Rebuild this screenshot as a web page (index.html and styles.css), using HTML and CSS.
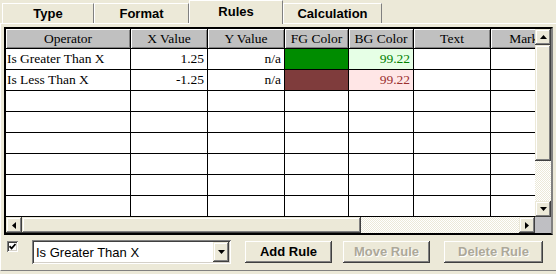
FILE: index.html
```html
<!DOCTYPE HTML>
<html>
<head>
<meta charset="utf-8" />
<title>Rules</title>
<link rel="stylesheet" href="styles.css">
</head>
<body>
	<div class="tabs">
		<div class="tab t-type">Type</div>
		<div class="tab t-format">Format</div>
		<div class="tab t-rules active">Rules</div>
		<div class="tab t-calc">Calculation</div>
	</div>
	<div class="panel">
		<div class="frame">
			<div class="view">
				<div class="row head">
					<div class="c c1">Operator</div>
					<div class="c c2">X Value</div>
					<div class="c c3">Y Value</div>
					<div class="c c4">FG Color</div>
					<div class="c c5">BG Color</div>
					<div class="c c6">Text</div>
					<div class="c c7">Marker</div>
				</div>
				<div class="row">
					<div class="c c1">Is Greater Than X</div>
					<div class="c c2 num">1.25</div>
					<div class="c c3 num">n/a</div>
					<div class="c c4 fg-green"></div>
					<div class="c c5 num bg-green">99.22</div>
					<div class="c c6"></div>
					<div class="c c7"></div>
				</div>
				<div class="row">
					<div class="c c1">Is Less Than X</div>
					<div class="c c2 num">-1.25</div>
					<div class="c c3 num">n/a</div>
					<div class="c c4 fg-red"></div>
					<div class="c c5 num bg-red">99.22</div>
					<div class="c c6"></div>
					<div class="c c7"></div>
				</div>
				<div class="row"><div class="c c1"></div><div class="c c2"></div><div class="c c3"></div><div class="c c4"></div><div class="c c5"></div><div class="c c6"></div><div class="c c7"></div></div>
				<div class="row"><div class="c c1"></div><div class="c c2"></div><div class="c c3"></div><div class="c c4"></div><div class="c c5"></div><div class="c c6"></div><div class="c c7"></div></div>
				<div class="row"><div class="c c1"></div><div class="c c2"></div><div class="c c3"></div><div class="c c4"></div><div class="c c5"></div><div class="c c6"></div><div class="c c7"></div></div>
				<div class="row"><div class="c c1"></div><div class="c c2"></div><div class="c c3"></div><div class="c c4"></div><div class="c c5"></div><div class="c c6"></div><div class="c c7"></div></div>
				<div class="row"><div class="c c1"></div><div class="c c2"></div><div class="c c3"></div><div class="c c4"></div><div class="c c5"></div><div class="c c6"></div><div class="c c7"></div></div>
				<div class="row"><div class="c c1"></div><div class="c c2"></div><div class="c c3"></div><div class="c c4"></div><div class="c c5"></div><div class="c c6"></div><div class="c c7"></div></div>
			</div>
			<div class="vscroll">
				<div class="sbtn"><svg width="7" height="4"><polygon points="0,4 3.5,0 7,4" fill="#000"/></svg></div>
				<div class="sbtn vthumb"></div>
				<div class="track"></div>
				<div class="sbtn"><svg width="7" height="4"><polygon points="0,0 7,0 3.5,4" fill="#000"/></svg></div>
			</div>
			<div class="hscroll">
				<div class="sbtn"><svg width="4" height="7"><polygon points="4,0 4,7 0,3.5" fill="#000"/></svg></div>
				<div class="sbtn hthumb"></div>
				<div class="track"></div>
				<div class="sbtn"><svg width="4" height="7"><polygon points="0,0 4,3.5 0,7" fill="#000"/></svg></div>
			</div>
			<div class="corner"></div>
		</div>
		<div class="controls">
			<div class="check"><svg width="7" height="7"><path d="M0.5 3.2 L2.6 5.4 L6.5 1" stroke="#000" stroke-width="1.7" fill="none"/></svg></div>
			<div class="combo">
				<span class="combo-text">Is Greater Than X</span>
				<div class="sbtn drop"><svg width="7" height="4"><polygon points="0,0 7,0 3.5,4" fill="#000"/></svg></div>
			</div>
			<div class="btn b-add">Add Rule</div>
			<div class="btn b-move off">Move Rule</div>
			<div class="btn b-del off">Delete Rule</div>
		</div>
	</div>
</body>
</html>
```

FILE: styles.css
```css
body{
	margin:0;
	width:556px;
	height:274px;
	overflow:hidden;
	background:#ece9d8;
	font-family:"Liberation Sans",Arial,sans-serif;
	font-size:13px;
	color:#000;
}
/* tab strip */
.tabs{display:flex;align-items:flex-end;height:23px;padding-left:2px;}
.tab{
	box-sizing:border-box;
	height:20px;
	border-top:1px solid #fff;
	border-left:1px solid #fff;
	border-right:1px solid #808080;
	font-weight:bold;
	text-align:center;
	line-height:19px;
	background:#ece9d8;
}
.t-type{width:92px;}
.t-format{width:95px;}
.t-rules{width:94px;}
.t-calc{width:99px;}
.tab.active{height:24px;margin-bottom:-1px;line-height:21px;position:relative;z-index:1;}

.panel{
	box-sizing:border-box;
	height:248px;
	border-top:1px solid #fff;
	border-left:1px solid #fff;
	border-bottom:1px solid #808080;
	padding:3px 3px 0 3px;
}
/* grid */
.frame{
	display:grid;
	grid-template-columns:529px 16px;
	grid-template-rows:188px 16px;
	width:max-content;
	border:2px solid #000;
	border-right-color:#808080;
}
.view{background:#fff;overflow:hidden;}
.row{display:flex;height:21px;box-sizing:border-box;border-bottom:1px solid #000;}
.row.head{height:20px;}
.c{
	flex:none;
	box-sizing:border-box;
	height:100%;
	border-right:1px solid #000;
	padding:0 3px 0 1px;
	font-family:"Liberation Serif","Times New Roman",serif;
	font-size:13.5px;
	line-height:20px;
	white-space:nowrap;
	overflow:hidden;
}
.head .c{
	background:#c0c0c0;
	text-align:center;
	line-height:19px;
	padding:0;
	box-shadow:inset 1px 1px #fff,inset -1px -1px #808080;
}
.c1{width:125px;}
.c2{width:77px;}
.c3{width:77px;}
.c4{width:64px;}
.c5{width:65px;}
.c6{width:77px;}
.c7{width:77px;}
.num{text-align:right;}
.fg-green{background:#008c00;}
.fg-red{background:#7f3c3c;}
.bg-green{background:#e6ffe6;color:#008000;}
.bg-red{background:#ffe6e6;color:#9a2f2f;}

/* scrollbars */
.sbtn{
	flex:none;
	box-sizing:border-box;
	width:16px;
	height:16px;
	background:#ece9d8;
	box-shadow:inset -1px -1px #404040,inset 1px 1px #ece9d8,inset -2px -2px #808080,inset 2px 2px #fff;
	display:flex;
	align-items:center;
	justify-content:center;
}
.track{flex:1;background:repeating-conic-gradient(#fff 0 25%,#ece9d8 0 50%) 0 0/2px 2px;}
.vscroll{display:flex;flex-direction:column;}
.vthumb{height:116px;}
.hscroll{display:flex;}
.hthumb{width:339px;}
.corner{background:#bfbfc3;}

/* bottom controls */
.controls{display:flex;align-items:center;height:24px;margin-top:5px;}
.check{
	box-sizing:border-box;
	width:11px;
	height:11px;
	margin-left:3px;
	align-self:flex-start;
	margin-top:1px;
	background:#fff;
	box-shadow:inset 1px 1px #808080,inset -1px -1px #fff,inset 2px 2px #404040,inset -2px -2px #d4d0c8;
	display:flex;
	align-items:center;
	justify-content:center;
}
.combo{
	box-sizing:border-box;
	width:199px;
	height:24px;
	margin-left:14px;
	padding:2px;
	background:#fff;
	box-shadow:inset 1px 1px #808080,inset -1px -1px #fff,inset 2px 2px #404040,inset -2px -2px #d4d0c8;
	display:flex;
	align-items:center;
}
.combo-text{flex:1;padding-left:2px;}
.drop{height:20px;}
.btn{
	box-sizing:border-box;
	height:22px;
	background:#ece9d8;
	box-shadow:inset -1px -1px #404040,inset 1px 1px #fff,inset -2px -2px #808080;
	font-weight:bold;
	text-align:center;
	line-height:22px;
}
.b-add{width:87px;margin-left:14px;}
.b-move{width:87px;margin-left:11px;}
.b-del{width:99px;margin-left:14px;}
.btn.off{color:#aca899;text-shadow:1px 1px #fff;}
```
